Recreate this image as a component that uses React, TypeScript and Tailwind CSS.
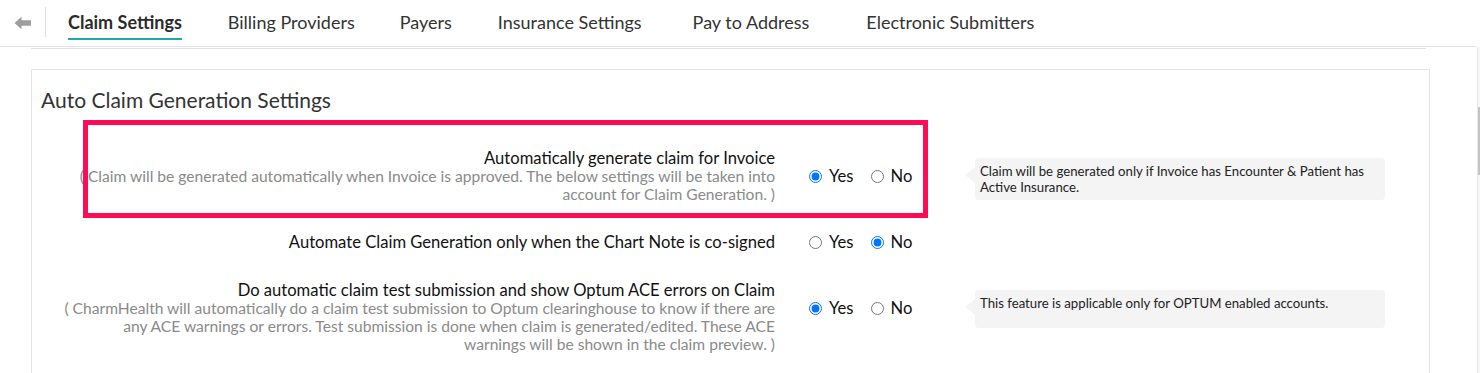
import { useState } from "react";

const tabs = [
  { label: "Claim Settings", active: true, ml: "ml-0" },
  { label: "Billing Providers", active: false, ml: "ml-[46px]" },
  { label: "Payers", active: false, ml: "ml-[45px]" },
  { label: "Insurance Settings", active: false, ml: "ml-[46px]" },
  { label: "Pay to Address", active: false, ml: "ml-[51px]" },
  { label: "Electronic Submitters", active: false, ml: "ml-[57px]" },
];

interface SettingRowProps {
  name: string;
  title: string;
  description?: string;
  value: "yes" | "no";
  hint?: string;
}

function Hint({ text }: { text: string }) {
  return (
    <div className="relative ml-[10px] mt-[9px] min-h-[38px] w-[410px] rounded-[4px] bg-[#f4f4f4] px-[5px] py-[5px] text-[13.2px] leading-[16px] text-[#222]">
      <span className="absolute -left-[10px] top-[9px] h-0 w-0 border-y-[8px] border-r-[10px] border-y-transparent border-r-[#f4f4f4]" />
      {text}
    </div>
  );
}

function SettingRow({ name, title, description, value, hint }: SettingRowProps) {
  const [selected, setSelected] = useState(value);
  const multi = Boolean(description);

  return (
    <div className="flex items-start">
      <div className="ml-[30px] w-[713px] text-right leading-[18px]">
        <div className="text-[16.6px] text-[#111]">{title}</div>
        {description ? <div className="text-[15.6px] text-[#8a8a8a]">{description}</div> : null}
      </div>
      <div className={multi ? "ml-[34px] mt-[18px] flex w-[156px] items-center" : "ml-[34px] flex w-[156px] items-center"}>
        <label className="flex items-center text-[16.6px] leading-[18px] text-[#111]">
          <input
            type="radio"
            name={name}
            checked={selected === "yes"}
            onChange={() => setSelected("yes")}
            className="m-0 size-[13px]"
          />
          <span className="ml-[7px]">Yes</span>
        </label>
        <label className="ml-[18px] flex items-center text-[16.6px] leading-[18px] text-[#111]">
          <input
            type="radio"
            name={name}
            checked={selected === "no"}
            onChange={() => setSelected("no")}
            className="m-0 size-[13px]"
          />
          <span className="ml-[6px]">No</span>
        </label>
      </div>
      {hint ? <Hint text={hint} /> : null}
    </div>
  );
}

export default function App() {
  return (
    <div className="flex min-h-screen bg-white font-['Lato','Open_Sans',sans-serif] text-[#333]">
      <div className="flex-1">
        <nav className="flex h-[47px] items-stretch border-b border-[#e2e2e2]">
          <div className="flex w-[45px] items-center pl-[14px]">
            <svg width="18" height="14" viewBox="0 0 18 14" fill="#9e9e9e">
              <path d="M0.5 7 L7.5 0.8 V4.2 H17 V9.8 H7.5 V13.2 Z" />
            </svg>
          </div>
          <div className="mt-[7px] h-[30px] w-px bg-[#dedede]" />
          <div className="ml-[22px] flex items-stretch">
            {tabs.map((tab) => (
              <div key={tab.label} className={`relative flex items-center pb-[2px] ${tab.ml}`}>
                <span
                  className={
                    tab.active
                      ? "text-[18px] font-bold text-[#2b2b2b]"
                      : "text-[18px] text-[#333]"
                  }
                >
                  {tab.label}
                </span>
                {tab.active ? (
                  <span className="absolute bottom-[6px] left-0 right-0 h-[2px] bg-[#1ea8aa]" />
                ) : null}
              </div>
            ))}
          </div>
        </nav>

        <div className="mx-[31px] mr-[51px] h-[2px] border-b border-[#e2e2e2]" />

        <section className="relative mb-6 ml-[31px] mr-[47px] mt-[20px] border border-[#e4e4e4] pb-10">
          <h2 className="pl-[9px] pt-[18px] text-[21px] leading-[24px] text-[#333]">
            Auto Claim Generation Settings
          </h2>

          <div className="mt-[37px] flex flex-col gap-[30px]">
            <SettingRow
              name="auto-claim"
              title="Automatically generate claim for Invoice"
              description="( Claim will be generated automatically when Invoice is approved. The below settings will be taken into account for Claim Generation. )"
              value="yes"
              hint="Claim will be generated only if Invoice has Encounter & Patient has Active Insurance."
            />
            <SettingRow
              name="co-signed"
              title="Automate Claim Generation only when the Chart Note is co-signed"
              value="no"
            />
            <SettingRow
              name="optum-ace"
              title="Do automatic claim test submission and show Optum ACE errors on Claim"
              description="( CharmHealth will automatically do a claim test submission to Optum clearinghouse to know if there are any ACE warnings or errors. Test submission is done when claim is generated/edited. These ACE warnings will be shown in the claim preview. )"
              value="yes"
              hint="This feature is applicable only for OPTUM enabled accounts."
            />
          </div>

          <div className="pointer-events-none absolute left-[51px] top-[50px] h-[98px] w-[845px] border-[5px] border-[#ff0a55]" />
        </section>
      </div>

      <div className="mt-[47px] w-[3px] border-l border-[#e6e6e6] bg-[#f7f7f7]">
        <div className="mt-[60px] h-[68px] bg-[#c4c4c4]" />
      </div>
    </div>
  );
}
